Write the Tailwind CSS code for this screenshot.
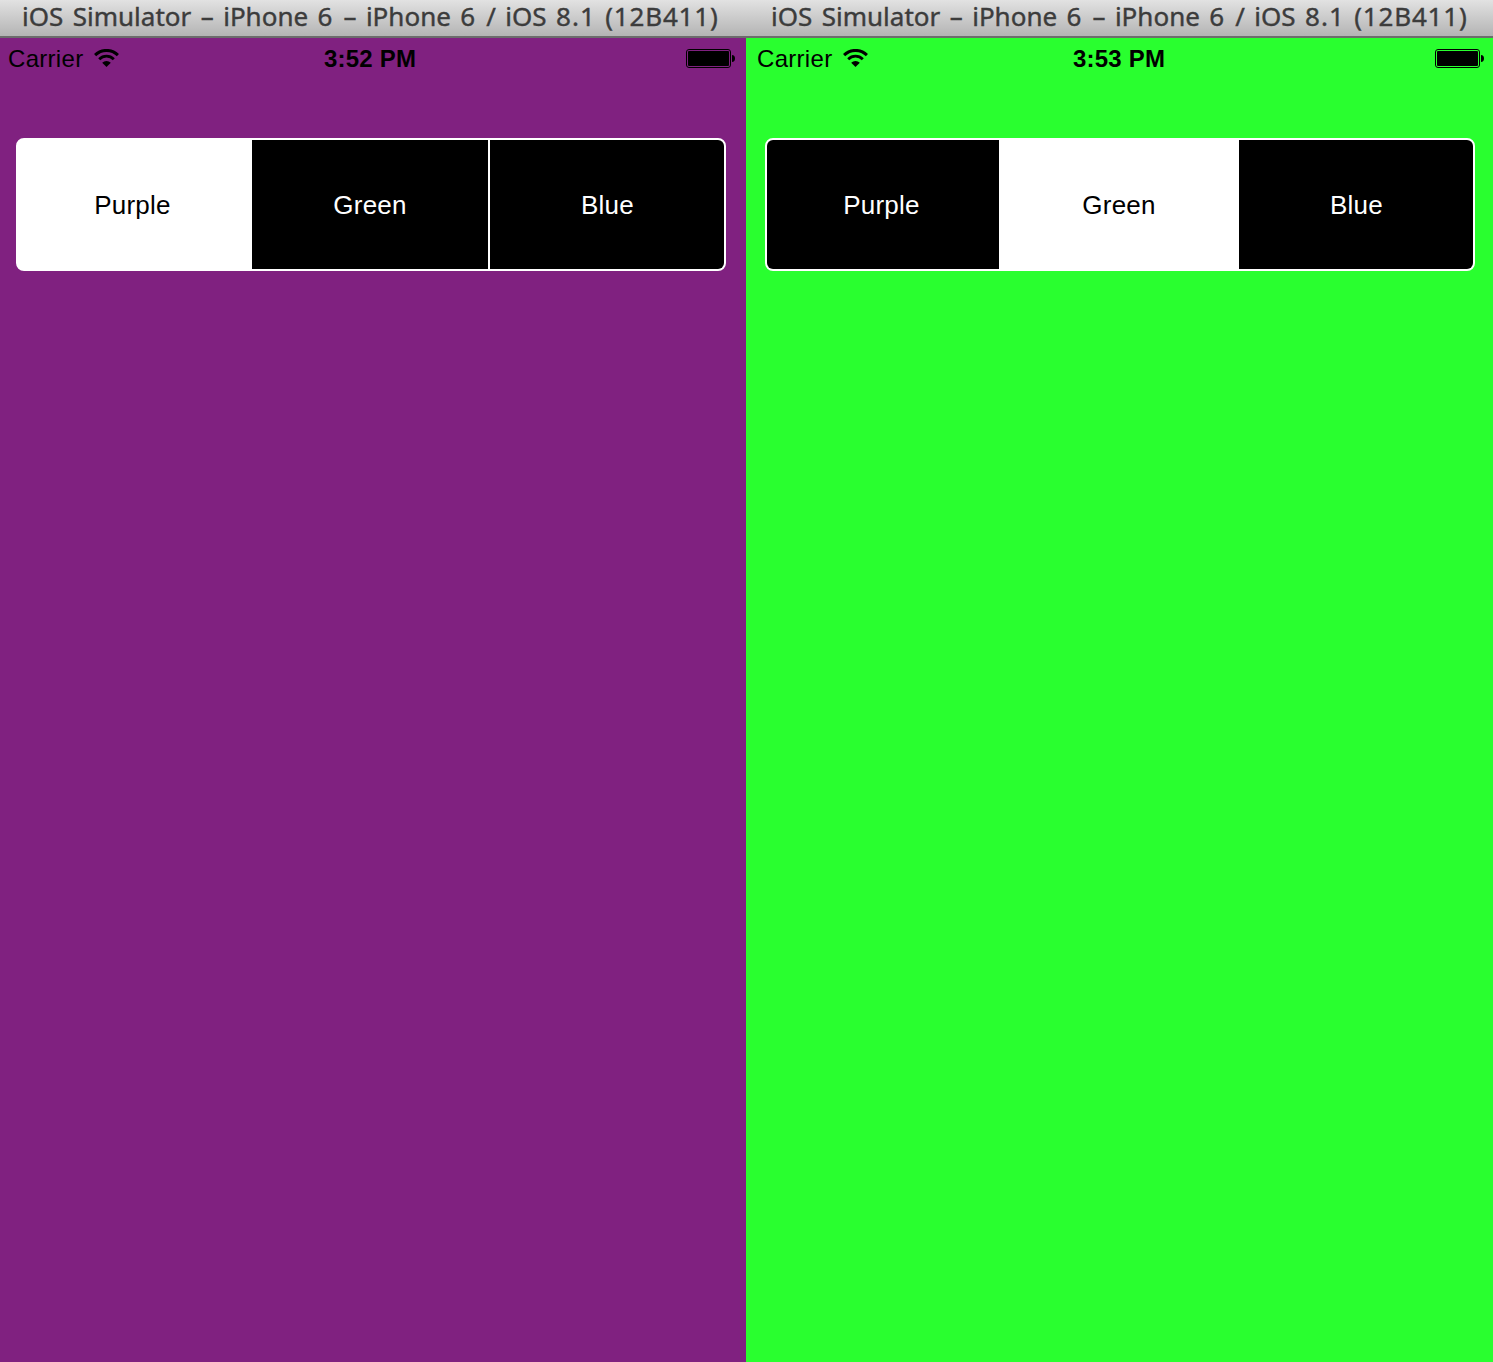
<!DOCTYPE html>
<html lang="en">
<head>
<meta charset="utf-8">
<title>iOS Simulator</title>
<script src="https://cdn.jsdelivr.net/npm/@tailwindcss/browser@4"></script>
</head>
<body class="flex h-[1362px] w-[1493px] font-['Liberation_Sans',sans-serif] text-black">
  <section class="flex w-[746px] shrink-0 flex-col bg-[#802180]">
    <header class="flex h-[38px] shrink-0 items-center border-b-2 border-[#6c6c6c] bg-linear-to-b from-[#e2e2e2] to-[#b4b4b4] pb-[5px] pl-[22px]">
      <h1 class="font-['Noto_Sans',sans-serif] text-[26px] leading-[36px] [word-spacing:2.7px] whitespace-nowrap text-[#3c3c3c] [-webkit-text-stroke:0.4px_#3c3c3c]">iOS Simulator – iPhone <span class="tracking-[1.5px]">6</span> – iPhone <span class="tracking-[1.5px]">6</span> / iOS <span class="tracking-[1px]">8.1</span> <span class="tracking-[0.8px]">(12B411)</span></h1>
    </header>
    <div class="grid h-[42px] w-[746px] shrink-0 grid-cols-[324px_1fr_auto] items-center pr-[11px] text-[24px] leading-[42px]">
      <div class="flex items-center gap-[10px] pl-[8px]">
        <span class="w-[76px] tracking-[0.3px]">Carrier</span>
        <svg class="mb-[2px] h-[18px] w-[25px]" viewBox="0 0 25 18"><path d="M1.1 6.1a16.2 16.2 0 0 1 22.8 0" fill="none" stroke="#000" stroke-width="3"/><path d="M5.2 10.2a10.4 10.4 0 0 1 14.6 0" fill="none" stroke="#000" stroke-width="2.8"/><path d="M8.2 13.7a6.1 6.1 0 0 1 8.6 0L12.5 18z"/></svg>
      </div>
      <span class="font-bold tracking-[0.2px]">3:52 PM</span>
      <svg class="mb-[1px] h-[19px] w-[49px]" viewBox="0 0 49 19"><rect x=".5" y=".5" width="44" height="18" rx="2.5" fill="none" stroke="#000"/><rect x="2" y="2" width="41" height="15" rx="1"/><path d="M46 6c2 0 3 1.500 3 3.500s-1 3.500-3 3.500z"/></svg>
    </div>
    <div class="mt-[58px] ml-4 flex h-[133px] w-[710px] shrink-0 overflow-hidden rounded-[8px] border-2 border-white bg-white text-[26px] leading-[131px] tracking-[0.2px]">
      <div class="h-[129px] w-[234px] bg-white pr-[5px] text-center">Purple</div>
      <div class="h-[129px] w-[236px] bg-black text-center text-white">Green</div>
      <div class="ml-[2px] h-[129px] w-[234px] bg-black pl-[1px] text-center text-white">Blue</div>
    </div>
  </section>
  <section class="flex w-[747px] shrink-0 flex-col bg-[#29ff2f]">
    <header class="flex h-[38px] shrink-0 items-center border-b-2 border-[#6c6c6c] bg-linear-to-b from-[#e2e2e2] to-[#b4b4b4] pb-[5px] pl-[25px]">
      <h1 class="font-['Noto_Sans',sans-serif] text-[26px] leading-[36px] [word-spacing:2.7px] whitespace-nowrap text-[#3c3c3c] [-webkit-text-stroke:0.4px_#3c3c3c]">iOS Simulator – iPhone <span class="tracking-[1.5px]">6</span> – iPhone <span class="tracking-[1.5px]">6</span> / iOS <span class="tracking-[1px]">8.1</span> <span class="tracking-[0.8px]">(12B411)</span></h1>
    </header>
    <div class="ml-[3px] grid h-[42px] w-[744px] shrink-0 grid-cols-[324px_1fr_auto] items-center pr-[9px] text-[24px] leading-[42px]">
      <div class="flex items-center gap-[10px] pl-[8px]">
        <span class="w-[76px] tracking-[0.3px]">Carrier</span>
        <svg class="mb-[2px] h-[18px] w-[25px]" viewBox="0 0 25 18"><path d="M1.1 6.1a16.2 16.2 0 0 1 22.8 0" fill="none" stroke="#000" stroke-width="3"/><path d="M5.2 10.2a10.4 10.4 0 0 1 14.6 0" fill="none" stroke="#000" stroke-width="2.8"/><path d="M8.2 13.7a6.1 6.1 0 0 1 8.6 0L12.5 18z"/></svg>
      </div>
      <span class="font-bold tracking-[0.2px]">3:53 PM</span>
      <svg class="mb-[1px] h-[19px] w-[49px]" viewBox="0 0 49 19"><rect x=".5" y=".5" width="44" height="18" rx="2.5" fill="none" stroke="#000"/><rect x="2" y="2" width="41" height="15" rx="1"/><path d="M46 6c2 0 3 1.500 3 3.500s-1 3.500-3 3.500z"/></svg>
    </div>
    <div class="mt-[58px] ml-[19px] flex h-[133px] w-[710px] shrink-0 overflow-hidden rounded-[8px] border-2 border-white bg-white text-[26px] leading-[131px] tracking-[0.2px]">
      <div class="h-[129px] w-[232px] bg-black pr-[3px] text-center text-white">Purple</div>
      <div class="h-[129px] w-[240px] bg-white text-center">Green</div>
      <div class="h-[129px] w-[234px] bg-black pl-[1px] text-center text-white">Blue</div>
    </div>
  </section>
</body>
</html>
